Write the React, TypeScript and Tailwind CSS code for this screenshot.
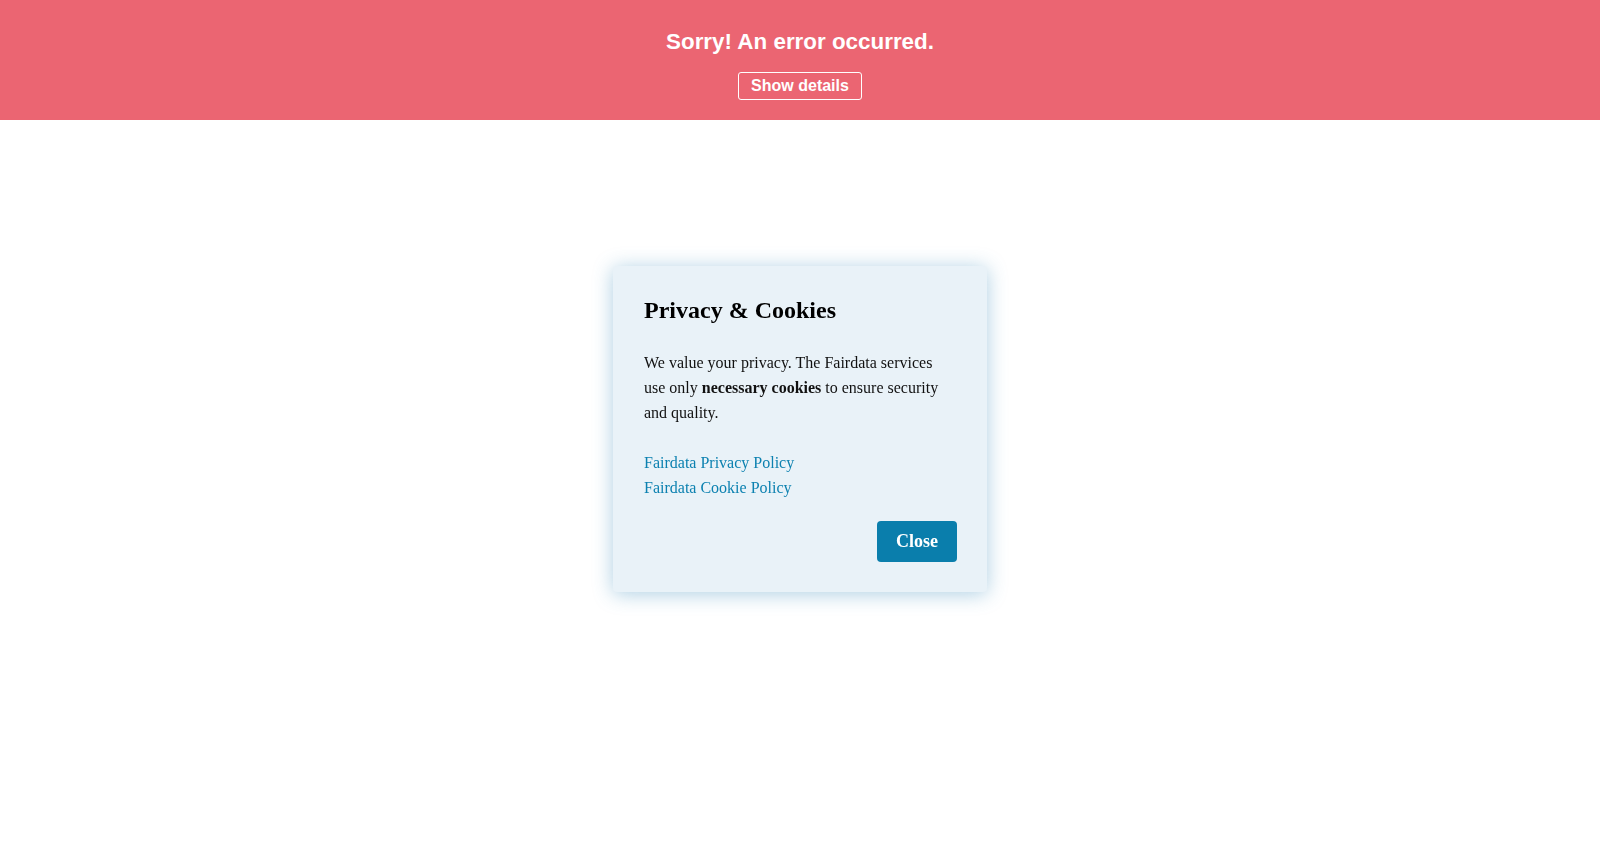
export default function App() {
  return (
    <div className="min-h-screen bg-white">
      {/* Error banner */}
      <div className="bg-[#eb6572] pt-[29px] pb-[20px] text-center text-white font-['Liberation_Sans',Arial,sans-serif]">
        <h1 className="text-[22.4px] leading-[25px] font-bold mb-[18px]">Sorry! An error occurred.</h1>
        <button className="inline-block border border-white rounded-[3px] px-[12px] pt-[3px] pb-[4px] text-[16px] leading-[19px] font-bold text-white">
          Show details
        </button>
      </div>

      {/* Cookie dialog */}
      <div className="fixed inset-0 flex items-center justify-center pointer-events-none">
        <div className="pointer-events-auto w-[374px] bg-[#e9f2f8] rounded-[4px] shadow-[0_2px_20px_rgba(50,135,185,0.4)] pt-[30px] pl-[31px] pr-[30px] pb-[30px] font-['Liberation_Serif','Times_New_Roman',serif] text-[#111]">
          <h2 className="text-[24px] leading-[28px] font-bold text-black mb-[26px]">Privacy &amp; Cookies</h2>
          <p className="text-[16px] leading-[25px] mb-[25px]">
            We value your privacy. The Fairdata services use only <b>necessary cookies</b> to ensure security and quality.
          </p>
          <div className="flex flex-col items-start text-[16px] leading-[25px] text-[#0c81b0]">
            <a href="#">Fairdata Privacy Policy</a>
            <a href="#">Fairdata Cookie Policy</a>
          </div>
          <div className="flex justify-end mt-[21px]">
            <button className="bg-[#0a7eac] text-white rounded-[4px] px-[19px] py-[10px] text-[18px] leading-[21px] font-bold">
              Close
            </button>
          </div>
        </div>
      </div>
    </div>
  );
}
